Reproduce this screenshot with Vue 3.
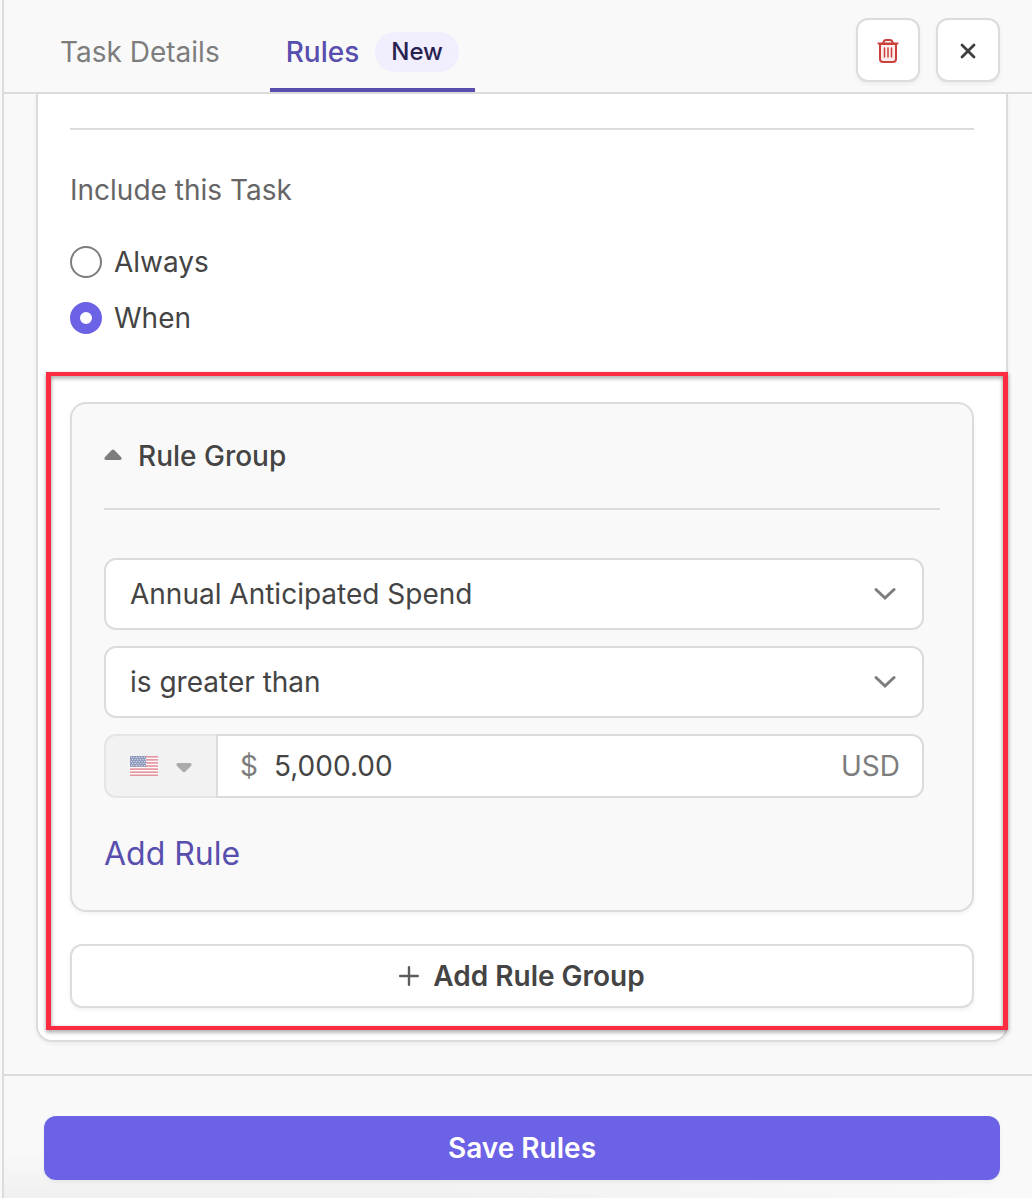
<script setup>
import { ref } from 'vue'

const include = ref('when')
const field = ref('Annual Anticipated Spend')
const operator = ref('is greater than')
const amount = ref('5,000.00')
const open = ref(true)
const stripes = [0, 2, 4, 6, 8, 10, 12]
</script>

<template>
  <div class="panel">
    <header class="header">
      <nav class="tabs">
        <a class="tab" href="#details">Task Details</a>
        <a class="tab active" href="#rules" aria-current="page">
          Rules <span class="badge">New</span>
        </a>
      </nav>
      <div class="actions">
        <button class="icon-btn" type="button" aria-label="Delete task">
          <svg width="24" height="28" viewBox="0 0 24 28" fill="none" stroke="#c9423f" stroke-linecap="round" stroke-linejoin="round">
            <path d="M4 7H20V22Q20 25 17 25H7Q4 25 4 22Z" fill="#fdeceb" stroke-width="2" />
            <path d="M2.500 6.500H21.500M7 6L8.500 3.500Q9 3 10 3H14Q15 3 15.500 3.500L17 6" stroke-width="2.200" />
            <path d="M8.500 11V20M12 11V20M15.500 11V20" stroke-width="1.500" />
          </svg>
        </button>
        <button class="icon-btn" type="button" aria-label="Close">
          <svg width="16" height="16" viewBox="0 0 16 16" fill="none" stroke="#3f3f3f" stroke-width="2.800" stroke-linecap="round">
            <path d="M2 2L14 14M14 2L2 14" />
          </svg>
        </button>
      </div>
    </header>

    <main class="content">
      <section class="card">
        <hr class="rule" />
        <fieldset class="include">
          <legend>Include this Task</legend>
          <label class="option"><input v-model="include" type="radio" name="include" value="always" />Always</label>
          <label class="option"><input v-model="include" type="radio" name="include" value="when" />When</label>
        </fieldset>

        <div class="highlight">
          <section class="group">
            <button class="group-head" type="button" :aria-expanded="open" @click="open = !open">
              <svg width="18" height="14" viewBox="0 0 18 14">
                <path d="M7.800 1Q9 0 10.200 1L17 8Q18.500 11 16 11H2Q-.500 11 1 8Z" fill="#7d7d7d" />
              </svg>
              Rule Group
            </button>
            <hr class="rule" />
            <div v-show="open" class="fields">
              <div class="select">
                <select v-model="field" aria-label="Field">
                  <option>Annual Anticipated Spend</option>
                </select>
                <svg class="chevron" width="22" height="14" viewBox="0 0 22 14"><path d="M2 2.500L11 11L20 2.500" /></svg>
              </div>
              <div class="select">
                <select v-model="operator" aria-label="Operator">
                  <option>is greater than</option>
                </select>
                <svg class="chevron" width="22" height="14" viewBox="0 0 22 14"><path d="M2 2.500L11 11L20 2.500" /></svg>
              </div>
              <div class="money">
                <button class="country" type="button" disabled aria-label="Currency country: United States">
                  <svg width="28" height="20" viewBox="0 0 28 20">
                    <rect width="28" height="20" fill="#fff" />
                    <rect v-for="i in stripes" :key="i" :y="(i * 20) / 13" width="28" height="1.600" fill="#d22f45" />
                    <rect width="16" height="10.800" fill="#2c4384" />
                    <path d="M1 1.500H16M2 3.500H16M1 5.500H16M2 7.500H16M1 9.500H16" stroke="#fff" stroke-opacity=".7" stroke-width="1" stroke-dasharray="1 1.600" />
                  </svg>
                  <svg width="16" height="16" viewBox="0 -4 16 16">
                    <path d="M2 1H14Q16.500 1.500 15 4L9.500 9.500Q8 10.800 6.500 9.500L1 4Q-.500 1.500 2 1Z" fill="#5f5f5f" />
                  </svg>
                </button>
                <label class="amount">
                  <span>$</span>
                  <input v-model="amount" type="text" inputmode="decimal" aria-label="Amount in USD" />
                  <span>USD</span>
                </label>
              </div>
              <button class="add-rule" type="button">Add Rule</button>
            </div>
          </section>
          <button class="add-group" type="button">
            <svg width="20" height="20" viewBox="0 0 20 20" fill="none" stroke="#5c5c5c" stroke-width="2.400" stroke-linecap="round">
              <path d="M10 1.200V18.800M1.200 10H18.800" />
            </svg>
            Add Rule Group
          </button>
        </div>
      </section>
    </main>

    <footer class="footer">
      <button class="save" type="button">Save Rules</button>
    </footer>
  </div>
</template>

<style>
body {
  margin: 0;
  background: #f9f9f9;
}
</style>

<style scoped>
* {
  box-sizing: border-box;
}
.panel {
  display: flex;
  flex-direction: column;
  min-height: 100vh;
  margin-left: 2px;
  border-left: 2px solid #dcdcdc;
  font: 400 28px/40px Inter, sans-serif;
  color: #444;
}
button,
input,
select {
  margin: 0;
  font: inherit;
  color: inherit;
}
button {
  padding: 0;
  border: 0;
  background: none;
  cursor: pointer;
}
.header {
  display: flex;
  justify-content: space-between;
  padding: 0 32px 0 40px;
  border-bottom: 2px solid #dcdcdc;
}
.tabs {
  display: flex;
  gap: 34px;
}
.tab {
  display: flex;
  align-items: center;
  gap: 16px;
  padding: 16px 16px 0;
  border-bottom: 4px solid transparent;
  color: #7d7d7d;
  text-decoration: none;
}
.tab.active {
  border-color: #584eae;
  color: #584eae;
  font-weight: 500;
}
.badge {
  padding: 0 16px;
  border-radius: 20px;
  background: #f1eefe;
  color: #292150;
  font-size: 24px;
}
.actions {
  display: flex;
  gap: 16px;
  padding: 18px 0 10px;
}
.icon-btn {
  display: grid;
  place-items: center;
  width: 64px;
  height: 64px;
  padding-top: 2px;
  border: 2px solid #dcdcdc;
  border-radius: 12px;
  background: #fff;
  box-shadow: 0 2px 4px rgba(0, 0, 0, 0.06);
}
.content {
  flex: 1;
  padding: 0 24px 32px 32px;
}
.card {
  padding: 34px 32px 32px;
  border: 2px solid #dcdcdc;
  border-top: 0;
  border-radius: 0 0 16px 16px;
  background: #fff;
  box-shadow: 0 2px 4px rgba(0, 0, 0, 0.06);
}
.rule {
  height: 2px;
  margin: 0;
  border: 0;
  background: #dcdcdc;
}
.include {
  display: flex;
  flex-direction: column;
  gap: 16px;
  margin: 40px 0 64px;
  padding: 0;
  border: 0;
}
.include legend {
  margin-bottom: 32px;
  padding: 0;
  color: #666;
}
.option {
  display: flex;
  align-items: center;
  gap: 12px;
}
.option input {
  appearance: none;
  width: 32px;
  height: 32px;
  border: 2px solid #7d7d7d;
  border-radius: 50%;
  background: #fff;
}
.option input:checked {
  border: 10px solid #6c62e6;
}
.highlight {
  position: relative;
  display: flex;
  flex-direction: column;
  gap: 32px;
}
.highlight::after {
  content: '';
  position: absolute;
  inset: -30px -34px -22px -24px;
  border: 4px solid #fb2b42;
  border-width: 4px 5px;
  filter: drop-shadow(0 2px 2px rgba(0, 0, 0, 0.4));
  pointer-events: none;
}
.group {
  padding: 32px;
  border: 2px solid #dcdcdc;
  border-radius: 16px;
  background: #f9f9f9;
  box-shadow: 0 2px 4px rgba(0, 0, 0, 0.05);
}
.group-head {
  display: flex;
  align-items: center;
  gap: 16px;
  margin-bottom: 32px;
  font-weight: 500;
}
.fields {
  display: flex;
  flex-direction: column;
  gap: 16px;
  padding: 48px 16px 0 0;
}
.select {
  display: grid;
  align-items: center;
}
.select select,
.chevron {
  grid-area: 1 / 1;
}
.select select {
  appearance: none;
  width: 100%;
  height: 72px;
  padding: 0 64px 0 24px;
  border: 2px solid #dcdcdc;
  border-radius: 12px;
  background: #fff;
}
.chevron {
  justify-self: end;
  margin-right: 28px;
  fill: none;
  stroke: #7d7d7d;
  stroke-width: 3;
  stroke-linecap: round;
  pointer-events: none;
}
.money {
  display: flex;
  height: 64px;
}
.country {
  display: flex;
  align-items: center;
  gap: 18px;
  width: 112px;
  padding-left: 24px;
  border: 2px solid #d2d2d2;
  border-right: 0;
  border-radius: 12px 0 0 12px;
  background: #ededed;
  opacity: 0.5;
}
.amount {
  display: flex;
  flex: 1;
  align-items: center;
  gap: 16px;
  padding: 0 22px;
  border: 2px solid #dcdcdc;
  border-radius: 0 12px 12px 0;
  background: #fff;
  color: #7d7d7d;
}
.amount input {
  flex: 1;
  min-width: 0;
  padding: 0;
  border: 0;
  outline: 0;
  background: none;
  color: #444;
}
.add-rule {
  align-self: flex-start;
  margin-top: 16px;
  color: #584eae;
  font-size: 32px;
  line-height: 48px;
}
.add-group {
  display: flex;
  align-items: center;
  justify-content: center;
  gap: 14px;
  height: 64px;
  border: 2px solid #dcdcdc;
  border-radius: 12px;
  background: #fff;
  box-shadow: 0 2px 4px rgba(0, 0, 0, 0.06);
  font-weight: 600;
}
.footer {
  padding: 40px 32px 18px 40px;
  border-top: 2px solid #dcdcdc;
  background:
    linear-gradient(to right, transparent 40%, #f9f9f9),
    linear-gradient(to top, #f0f0f0, #f9f9f9 48px);
}
.save {
  display: block;
  width: 100%;
  height: 64px;
  border-radius: 12px;
  background: #6c62e6;
  box-shadow: 0 2px 4px rgba(0, 0, 0, 0.06);
  color: #fff;
  font-weight: 600;
}
</style>
